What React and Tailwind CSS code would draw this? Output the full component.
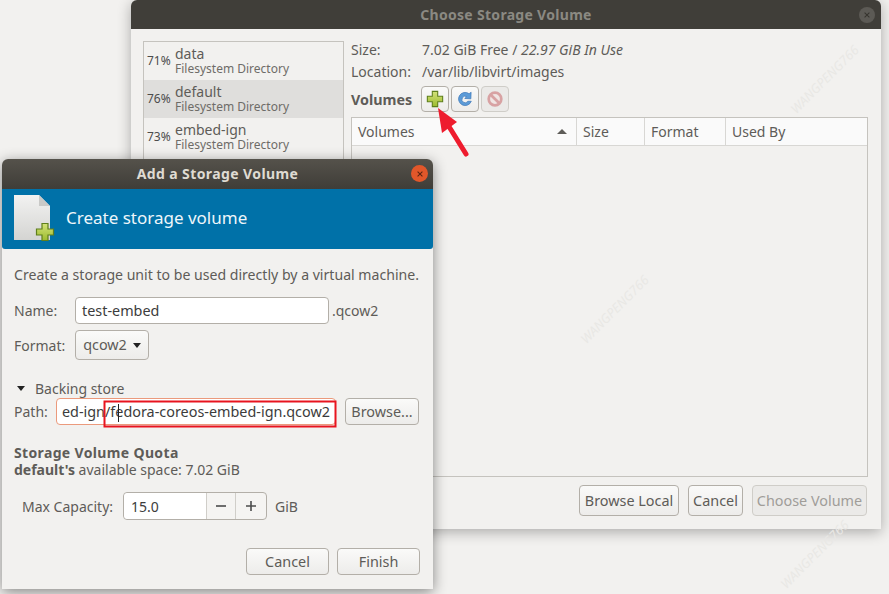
import React from 'react';

const FONT = "font-['Noto_Sans','Open_Sans',sans-serif]";

const PlusIcon = ({ className = '' }) => (
  <svg viewBox="0 0 20 20" className={className}>
    <defs>
      <linearGradient id="plusGrad" x1="0" y1="0" x2="0" y2="1">
        <stop offset="0" stopColor="#d3e27a" />
        <stop offset="1" stopColor="#9dbb2e" />
      </linearGradient>
    </defs>
    <path d="M7 1.5h6v5.5h5.5v6H13v5.5H7V13H1.5V7H7z" fill="url(#plusGrad)" stroke="#5f7f1c" strokeWidth="1.2" />
  </svg>
);

const RefreshIcon = () => (
  <svg viewBox="0 0 20 20" className="w-[18px] h-[18px]">
    <path d="M17 12.500a7.300 7.300 0 1 1-2.500-8.400l2.300-1.600-.3 7.300-6.800-.4 2.200-2a3.600 3.600 0 1 0 1.300 5.100z" fill="#5b9bd8" stroke="#3f78b8" strokeWidth="0.8" strokeLinejoin="round" />
  </svg>
);

const StopIcon = () => (
  <svg viewBox="0 0 20 20" className="w-[18px] h-[18px] opacity-70">
    <circle cx="10" cy="10" r="7" fill="#f3e3e1" stroke="#d08587" strokeWidth="3" />
    <path d="M5.500 5.500l9 9" stroke="#d08587" strokeWidth="3" />
  </svg>
);

const Btn = ({ children, className = '', disabled = false }) => (
  <div
    className={`flex items-center justify-center rounded-[4px] border text-[14.4px] whitespace-nowrap ${
      disabled
        ? 'border-[#cfcdc8] bg-[#ebeae8] text-[#a09d99]'
        : 'border-[#b3afa8] bg-gradient-to-b from-[#fafaf9] to-[#edecea] text-[#5e5c58]'
    } ${className}`}
  >
    {children}
  </div>
);

const ListRow = ({ pct, name, selected }) => (
  <div className={`h-[38px] flex items-center pl-[3px] ${selected ? 'bg-[#dfdedc]' : ''}`}>
    <span className="w-[28px] text-[12px] text-[#4c4c4c]">{pct}</span>
    <div className="flex flex-col leading-[15px]">
      <span className="text-[14px] text-[#5e5c58]">{name}</span>
      <span className="text-[12px] text-[#6e6c68]">Filesystem Directory</span>
    </div>
  </div>
);

const ColHead = ({ children, className = '' }) => (
  <div className={`h-full flex items-center pl-[6px] border-r border-[#d8d7d4] text-[14px] text-[#5e5c58] ${className}`}>
    {children}
  </div>
);

const Watermark = ({ className }) => (
  <span className={`absolute -rotate-45 text-[13px] italic text-[#e9e8e5] pointer-events-none ${className}`}>
    WANGPENG766
  </span>
);

const ChooseVolumeWindow = () => (
  <div className="absolute left-[131px] top-0 w-[750px] h-[529px] flex flex-col bg-[#f2f1ef] rounded-t-[6px] shadow-[0_3px_14px_rgba(0,0,0,0.3)]">
    <div className="h-[29px] shrink-0 relative flex items-center justify-center rounded-t-[6px] bg-[#403e39]">
      <span className="text-[14px] font-bold tracking-[0.3px] text-[#8b8982]">Choose Storage Volume</span>
      <div className="absolute right-[6px] top-[7px] w-[16px] h-[16px] rounded-full bg-[#5c5a55] flex items-center justify-center text-[#36342f]">
        <svg viewBox="0 0 10 10" className="w-[8px] h-[8px]"><path d="M2 2l6 6M8 2l-6 6" stroke="currentColor" strokeWidth="1.3" /></svg>
      </div>
    </div>
    <div className="flex-1 flex pl-[12px] pr-[13px] pt-[12px] pb-[13px]">
      <div className="w-[201px] shrink-0 border border-[#c5c3be] mb-[52px]">
        <ListRow pct="71%" name="data" />
        <ListRow pct="76%" name="default" selected />
        <ListRow pct="73%" name="embed-ign" />
      </div>
      <div className="flex-1 flex flex-col pl-[7px] -mt-[3px]">
        <div className="flex h-[22px] items-center text-[14px] text-[#5e5c58]">
          <span className="w-[71px]">Size:</span>
          <span>7.02 GiB Free / <em>22.97 GiB In Use</em></span>
        </div>
        <div className="flex h-[22px] items-center text-[14px] text-[#5e5c58]">
          <span className="w-[71px]">Location:</span>
          <span>/var/lib/libvirt/images</span>
        </div>
        <div className="flex items-center gap-[2px] h-[28px] mt-[3px]">
          <span className="w-[68px] mt-[1px] text-[14.3px] font-bold text-[#5e5c58]">Volumes</span>
          <Btn className="w-[28px] h-[26px]"><PlusIcon className="w-[18px] h-[18px]" /></Btn>
          <Btn className="w-[28px] h-[26px]"><RefreshIcon /></Btn>
          <Btn disabled className="w-[28px] h-[26px]"><StopIcon /></Btn>
        </div>
        <div className="flex-1 flex flex-col mt-[4px] border border-[#c5c3be]">
          <div className="h-[28px] flex items-center bg-[#fafafa] border-b border-[#d8d7d4]">
            <ColHead className="w-[225px] justify-between pr-[9px]">
              Volumes
              <span className="w-0 h-0 border-x-[5px] border-x-transparent border-b-[5px] border-b-[#5e5c58]" />
            </ColHead>
            <ColHead className="w-[68px]">Size</ColHead>
            <ColHead className="w-[81px]">Format</ColHead>
            <div className="pl-[6px] text-[14px] text-[#5e5c58]">Used By</div>
          </div>
        </div>
        <div className="flex justify-end gap-[9px] mt-[8px] mr-[1px]">
          <Btn className="w-[100px] h-[31px]">Browse Local</Btn>
          <Btn className="w-[55px] h-[31px]">Cancel</Btn>
          <Btn disabled className="w-[115px] h-[31px]">Choose Volume</Btn>
        </div>
      </div>
    </div>
  </div>
);

const AddVolumeWindow = () => (
  <div className="absolute left-[2px] top-[159px] w-[431px] h-[430px] flex flex-col bg-[#f2f1ef] rounded-t-[6px] shadow-[0_3px_14px_rgba(0,0,0,0.45)]">
    <div className="h-[30px] shrink-0 relative flex items-center justify-center rounded-t-[6px] bg-gradient-to-b from-[#55524b] to-[#3f3d38]">
      <span className="-mt-[2px] text-[14px] font-bold tracking-[0.4px] text-[#dfdbd2]">Add a Storage Volume</span>
      <div className="absolute right-[5px] top-[6px] w-[17px] h-[17px] rounded-full bg-[#e2572a] flex items-center justify-center text-[#5a2412]">
        <svg viewBox="0 0 10 10" className="w-[8px] h-[8px]"><path d="M2 2l6 6M8 2l-6 6" stroke="currentColor" strokeWidth="1.3" /></svg>
      </div>
    </div>
    <div className="h-[60px] shrink-0 flex items-center bg-[#0071a8] rounded-b-[3px] pl-[12px]">
      <div className="relative w-[41px] h-[47px] shrink-0 mt-[-1px]">
        <svg viewBox="0 0 36 45" className="w-[36px] h-[45px]">
          <defs>
            <linearGradient id="pageGrad" x1="0" y1="0" x2="0" y2="1">
              <stop offset="0" stopColor="#f2f2f1" />
              <stop offset="1" stopColor="#d4d4d2" />
            </linearGradient>
          </defs>
          <path d="M0 0h25l11 11v34H0z" fill="url(#pageGrad)" />
          <path d="M25 0v11h11z" fill="#c9c9c7" />
        </svg>
        <PlusIcon className="absolute left-[21px] top-[27px] w-[20px] h-[20px]" />
      </div>
      <span className="ml-[11px] -mt-[2px] text-[17px] text-[#eef6fa]">Create storage volume</span>
    </div>
    <div className="flex-1 flex flex-col pl-[12px] pr-[13px]">
      <div className="mt-[14px] h-[24px] flex items-center text-[14.1px] whitespace-nowrap text-[#5e5c58]">
        Create a storage unit to be used directly by a virtual machine.
      </div>
      <div className="mt-[10px] flex items-center h-[27px] text-[14px] text-[#5e5c58]">
        <span className="w-[61px]">Name:</span>
        <div className="w-[254px] h-[27px] flex items-center pl-[6px] bg-white rounded-[4px] border border-[#b3afa8] text-[14.4px] text-[#3c3c3c]">test-embed</div>
        <span className="ml-[3px]">.qcow2</span>
      </div>
      <div className="mt-[6px] flex items-center h-[30px] text-[14px] text-[#5e5c58]">
        <span className="w-[61px]">Format:</span>
        <Btn className="w-[74px] h-[30px] gap-[6px]">
          qcow2
          <span className="w-0 h-0 border-x-[4px] border-x-transparent border-t-[5px] border-t-[#222]" />
        </Btn>
      </div>
      <div className="mt-[19px] flex items-center h-[19px] text-[14px] text-[#5e5c58]">
        <span className="ml-[3px] w-0 h-0 border-x-[4.500px] border-x-transparent border-t-[5px] border-t-[#222]" />
        <span className="ml-[10px]">Backing store</span>
      </div>
      <div className="flex items-center h-[27px] text-[14px] text-[#5e5c58]">
        <span className="w-[42px]">Path:</span>
        <div className="w-[280px] h-[27px] flex items-center justify-end pr-[5px] bg-white rounded-[4px] border border-[#eb9a7c] text-[14.4px] text-[#3c3c3c] whitespace-nowrap">
          ed-ign/fedora-coreos-embed-ign.qcow2
        </div>
        <Btn className="ml-[9px] w-[74px] h-[27px]">Browse...</Btn>
      </div>
      <div className="mt-[19px] text-[14px] font-bold tracking-[0.35px] leading-[17px] text-[#5e5c58]">Storage Volume Quota</div>
      <div className="text-[14px] leading-[17px] text-[#5e5c58]"><b>default's</b> available space: 7.02 GiB</div>
      <div className="mt-[14px] flex items-center h-[28px] pl-[8px] text-[14px] text-[#5e5c58]">
        <span className="w-[101px]">Max Capacity:</span>
        <div className="w-[144px] h-[28px] flex items-center rounded-[4px] border border-[#b3afa8] bg-[#f5f4f2]">
          <div className="w-[83px] h-full flex items-center pl-[7px] rounded-l-[4px] bg-white border-r border-[#d0cec9] text-[#3c3c3c]">15.0</div>
          <div className="w-[29px] h-full flex items-center justify-center border-r border-[#d0cec9] text-[#4c4c4c]">
            <svg viewBox="0 0 12 12" className="w-[12px] h-[12px]"><path d="M1 6h10" stroke="currentColor" strokeWidth="1.6" /></svg>
          </div>
          <div className="flex-1 flex items-center justify-center text-[#4c4c4c]">
            <svg viewBox="0 0 12 12" className="w-[12px] h-[12px]"><path d="M1 6h10M6 1v10" stroke="currentColor" strokeWidth="1.6" /></svg>
          </div>
        </div>
        <span className="ml-[8px]">GiB</span>
      </div>
      <div className="mt-[28px] flex justify-end gap-[8px]">
        <Btn className="w-[83px] h-[27px]">Cancel</Btn>
        <Btn className="w-[83px] h-[27px]">Finish</Btn>
      </div>
    </div>
  </div>
);

export default function App() {
  return (
    <div className={`relative w-[889px] h-[594px] overflow-hidden bg-[#f2f1ef] ${FONT}`}>
      <ChooseVolumeWindow />
      <AddVolumeWindow />
      {/* annotations on top of the screenshot */}
      <svg viewBox="0 0 889 594" className="absolute inset-0 w-[889px] h-[594px] pointer-events-none">
        <path d="M438 108l19 14-15 11z" fill="#ee1c2e" />
        <path d="M448 125l18 29" stroke="#ee1c2e" strokeWidth="5" strokeLinecap="round" fill="none" />
        <rect x="104.500" y="401.500" width="231" height="25" fill="none" stroke="#e8141f" strokeWidth="2" />
        <path d="M118.500 404v18" stroke="#222" strokeWidth="1" />
      </svg>
      <Watermark className="left-[780px] top-[70px]" />
      <Watermark className="left-[570px] top-[300px]" />
      <Watermark className="left-[770px] top-[545px]" />
    </div>
  );
}
